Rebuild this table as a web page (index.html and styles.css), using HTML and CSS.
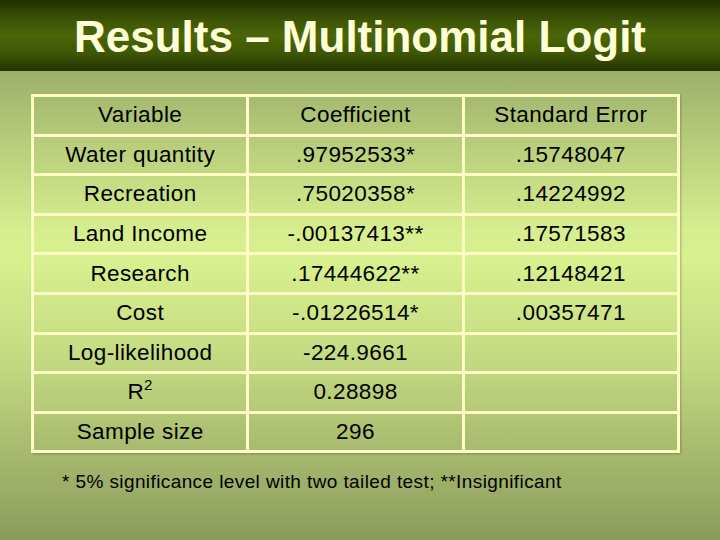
FILE: index.html
```html
<!DOCTYPE html>
<html>
<head>
<meta charset="utf-8">
<link rel="stylesheet" href="styles.css">
</head>
<body>
<div class="slide">
  <header class="title-band">
    <h1 class="title">Results – Multinomial Logit</h1>
  </header>
  <main class="content">
    <table class="results">
      <tr><td>Variable</td><td>Coefficient</td><td>Standard Error</td></tr>
      <tr><td>Water quantity</td><td>.97952533*</td><td>.15748047</td></tr>
      <tr><td>Recreation</td><td>.75020358*</td><td>.14224992</td></tr>
      <tr><td>Land Income</td><td>-.00137413**</td><td>.17571583</td></tr>
      <tr><td>Research</td><td>.17444622**</td><td>.12148421</td></tr>
      <tr><td>Cost</td><td>-.01226514*</td><td>.00357471</td></tr>
      <tr><td>Log-likelihood</td><td>-224.9661</td><td></td></tr>
      <tr><td>R<sup class="sq">2</sup></td><td>0.28898</td><td></td></tr>
      <tr><td>Sample size</td><td>296</td><td></td></tr>
    </table>
    <p class="note">* 5% significance level with two tailed test; **Insignificant</p>
  </main>
</div>
</body>
</html>
```
FILE: styles.css
```css
html, body {
  margin: 0;
  padding: 0;
}
body {
  font-family: "Liberation Sans", Arial, sans-serif;
}
.slide {
  width: 720px;
  height: 540px;
  overflow: hidden;
  display: flex;
  flex-direction: column;
  background: linear-gradient(180deg,
    #9cb06a 71px,
    #b6cc7a 140px,
    #d6ee8e 230px,
    #d8f08e 260px,
    #c4da82 360px,
    #a8ba6e 450px,
    #8a9c5c 540px);
}
.title-band {
  height: 71px;
  flex: none;
  background: linear-gradient(180deg, #223000 0%, #3e5606 30%, #4a6608 50%, #3e5606 75%, #233400 100%);
  display: flex;
  justify-content: center;
}
.title {
  margin: 0;
  padding-top: 14px;
  font-size: 44px;
  line-height: 46px;
  font-weight: bold;
  color: #fffed6;
  letter-spacing: 0;
}
.content {
  padding: 23px 40px 0 31px;
}
.results {
  width: 649px;
  border-collapse: collapse;
  table-layout: fixed;
  box-shadow: 1px 1px 2px rgba(60, 70, 30, 0.35);
}
.results td {
  border: 3px solid #fffcc6;
  height: 36.6px;
  padding: 0;
  text-align: center;
  vertical-align: middle;
  font-size: 22.5px;
  letter-spacing: 0.4px;
  color: #000;
}
.sq {
  font-size: 15px;
  vertical-align: 9px;
  line-height: 0;
}
.note {
  margin: 18px 0 0 31px;
  font-size: 19px;
  letter-spacing: 0.4px;
  color: #000;
}
```
